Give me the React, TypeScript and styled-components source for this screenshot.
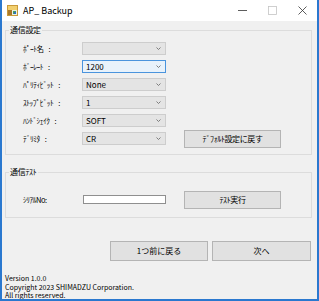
import styled, { createGlobalStyle } from "styled-components";

const GlobalStyle = createGlobalStyle`
  html, body {
    margin: 0;
    padding: 0;
    background: #ffffff;
  }
  * {
    box-sizing: border-box;
  }
`;

const font = `"Noto Sans CJK JP", "Noto Sans", sans-serif`;

const Window = styled.div`
  width: 319px;
  height: 301px;
  display: flex;
  flex-direction: column;
  background: #f0f0f0;
  border: 2px solid #2a78cf;
  border-top: none;
  font-family: ${font};
  color: #000;
  overflow: hidden;
`;

const TitleBar = styled.div`
  height: 21px;
  flex: none;
  display: flex;
  align-items: center;
  background: #ffffff;
  padding-left: 5px;
`;

const Title = styled.span`
  font-size: 9px;
  line-height: 10px;
  margin-left: 5px;
  flex: 1;
`;

const Controls = styled.div`
  display: flex;
  height: 100%;
`;

const ControlButton = styled.div`
  width: 30px;
  height: 100%;
  display: flex;
  align-items: center;
  justify-content: center;
`;

const Content = styled.div`
  flex: 1;
  display: flex;
  flex-direction: column;
  padding: 4px 5px 0 3px;
`;

const Group = styled.fieldset<{ $gap?: number }>`
  margin: ${({ $gap }) => $gap ?? 0}px 0 0 0;
  padding: 0 0 0 17px;
  min-width: 0;
  border: 1px solid #dcdcdc;
  border-radius: 0;
`;

const Legend = styled.legend`
  font-size: 8px;
  line-height: 10px;
  padding: 0 1px;
  margin-left: -14px;
  letter-spacing: -0.3px;
`;

const FormGrid = styled.div<{ $top: number; $bottom: number }>`
  display: grid;
  grid-template-columns: 59px 84px 18px 97px;
  grid-auto-rows: 13px;
  row-gap: 5px;
  align-items: center;
  padding: ${({ $top }) => $top}px 0 ${({ $bottom }) => $bottom}px;
`;

const Label = styled.span`
  font-size: 7.5px;
  line-height: 10px;
  grid-column: 1;
  white-space: nowrap;
  letter-spacing: -0.5px;
`;

const Colon = styled.span`
  margin-left: 5px;
`;

const Combo = styled.div<{ $focused?: boolean }>`
  grid-column: 2;
  height: 13px;
  display: flex;
  align-items: center;
  justify-content: space-between;
  padding: 0 4px 0 3px;
  font-size: 8px;
  line-height: 10px;
  background: ${({ $focused }) => ($focused ? "#e8f2fb" : "#e4e4e4")};
  border: 1px solid ${({ $focused }) => ($focused ? "#4a94dd" : "#cdcdcd")};
`;

const Chevron = () => (
  <svg width="5" height="3" viewBox="0 0 5 3">
    <path d="M0.5 0.5 L2.5 2.5 L4.5 0.5" fill="none" stroke="#707070" strokeWidth="0.9" />
  </svg>
);

const Button = styled.div<{ $w: number; $h: number }>`
  width: ${({ $w }) => $w}px;
  height: ${({ $h }) => $h}px;
  display: flex;
  align-items: center;
  justify-content: center;
  font-size: 8px;
  line-height: 10px;
  background: #e1e1e1;
  border: 1px solid #b4b4b4;
  white-space: nowrap;
`;

const SideButton = styled(Button)`
  grid-column: 4;
  align-self: center;
  letter-spacing: -0.4px;
`;

const TextBox = styled.div`
  grid-column: 2;
  height: 9px;
  background: #ffffff;
  border: 1px solid #8f8f8f;
  margin-left: 1px;
`;

const NavRow = styled.div`
  display: flex;
  justify-content: flex-end;
  gap: 4px;
  margin-top: 23px;
  padding-right: 1px;
`;

const Footer = styled.div`
  margin-top: 13px;
  font-size: 7px;
  line-height: 8.5px;
`;

const AppIcon = () => (
  <svg width="11" height="11" viewBox="0 0 11 11">
    <rect x="0" y="0" width="11" height="11" fill="#c99a3a" />
    <rect x="1" y="1" width="9" height="4" fill="#f1cf6e" />
    <rect x="1" y="5" width="9" height="5" fill="#a9782a" />
    <rect x="5" y="5" width="5" height="5" fill="#e9f1e6" />
    <rect x="6" y="6" width="3" height="3" fill="#4c9a63" />
    <rect x="7" y="7" width="2" height="2" fill="#2f6fc0" />
  </svg>
);

const rows: { label: string; value: string; focused?: boolean }[] = [
  { label: "ﾎﾟｰﾄ名", value: "" },
  { label: "ﾎﾞｰﾚｰﾄ", value: "1200", focused: true },
  { label: "ﾊﾟﾘﾃｨﾋﾞｯﾄ", value: "None" },
  { label: "ｽﾄｯﾌﾟﾋﾞｯﾄ", value: "1" },
  { label: "ﾊﾝﾄﾞｼｪｲｸ", value: "SOFT" },
  { label: "ﾃﾞﾘﾐﾀ", value: "CR" },
];

export default function App() {
  return (
    <>
      <GlobalStyle />
      <Window>
        <TitleBar>
          <AppIcon />
          <Title>AP_ Backup</Title>
          <Controls>
            <ControlButton>
              <svg width="9" height="9" viewBox="0 0 9 9">
                <path d="M0 4.5 H9" stroke="#333" strokeWidth="0.8" />
              </svg>
            </ControlButton>
            <ControlButton>
              <svg width="9" height="9" viewBox="0 0 9 9">
                <rect x="0.5" y="0.5" width="8" height="8" fill="none" stroke="#c4c4c4" strokeWidth="0.8" />
              </svg>
            </ControlButton>
            <ControlButton>
              <svg width="9" height="9" viewBox="0 0 9 9">
                <path d="M0.5 0.5 L8.5 8.5 M8.5 0.5 L0.5 8.5" stroke="#333" strokeWidth="0.8" />
              </svg>
            </ControlButton>
          </Controls>
        </TitleBar>
        <Content>
          <Group>
            <Legend>通信設定</Legend>
            <FormGrid $top={7} $bottom={9}>
              {rows.map((r, i) => [
                <Label key={`l${i}`} style={{ gridRow: i + 1 }}>
                  {r.label}
                  <Colon>:</Colon>
                </Label>,
                <Combo key={`c${i}`} $focused={r.focused} style={{ gridRow: i + 1 }}>
                  <span>{r.value}</span>
                  <Chevron />
                </Combo>,
              ])}
              <SideButton $w={97} $h={18} style={{ gridRow: 6 }}>
                ﾃﾞﾌｫﾙﾄ設定に戻す
              </SideButton>
            </FormGrid>
          </Group>
          <Group $gap={12}>
            <Legend>通信ﾃｽﾄ</Legend>
            <FormGrid $top={16} $bottom={11}>
              <Label>ｼﾘｱﾙNo:</Label>
              <TextBox />
              <SideButton $w={97} $h={18}>
                ﾃｽﾄ実行
              </SideButton>
            </FormGrid>
          </Group>
          <NavRow>
            <Button $w={98} $h={20}>1つ前に戻る</Button>
            <Button $w={99} $h={20}>次へ</Button>
          </NavRow>
          <Footer>
            Version 1.0.0
            <br />
            Copyright 2023 SHIMADZU Corporation.
            <br />
            All rights reserved.
          </Footer>
        </Content>
      </Window>
    </>
  );
}
